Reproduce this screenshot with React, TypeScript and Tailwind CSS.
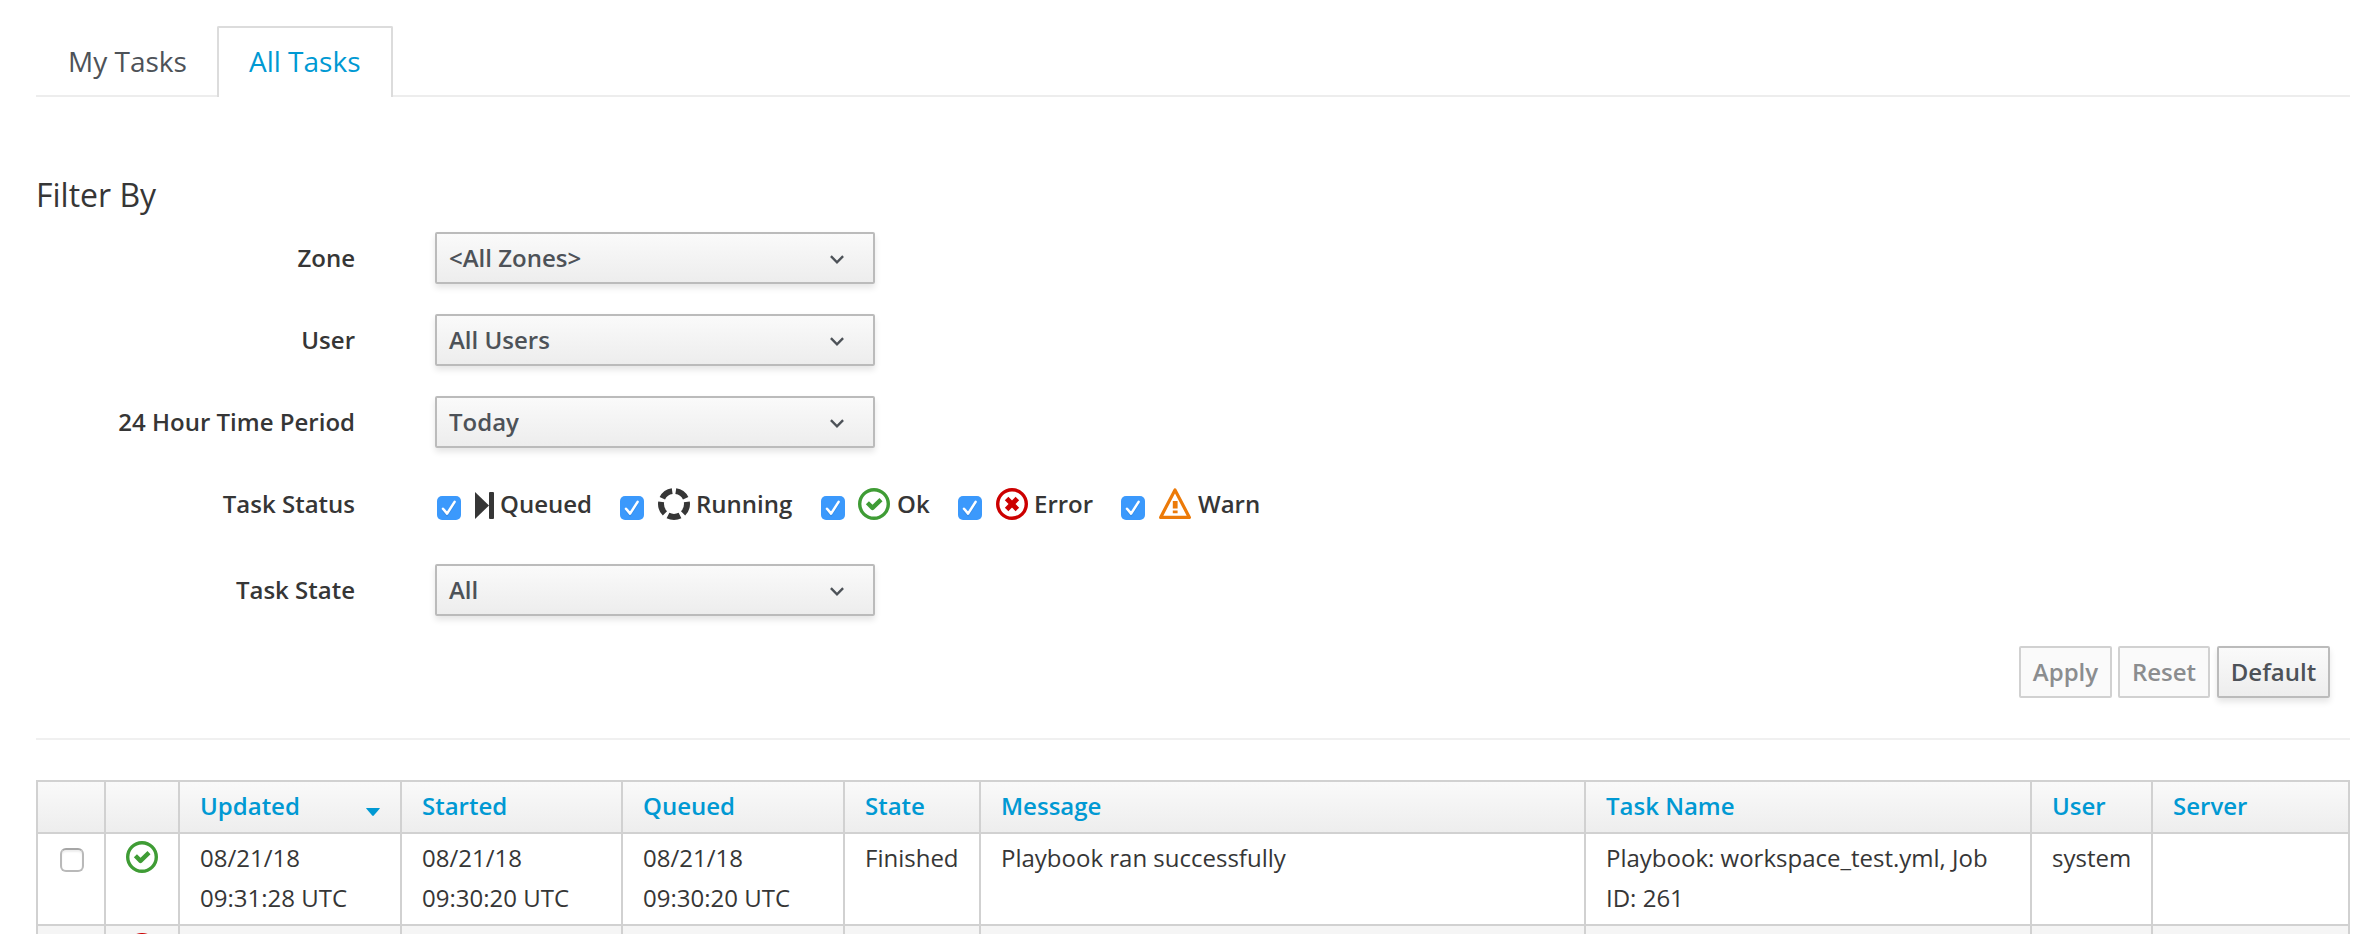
import type { ReactNode } from 'react';

const SELECT_LABEL = 'w-[319px] pt-[6px] text-right font-semibold leading-[40px]';

function OkIcon() {
  return (
    <svg className="block h-8 w-8 shrink-0" viewBox="0 0 32 32" fill="none">
      <circle cx="16" cy="16" r="14.3" stroke="#3f9c35" strokeWidth="3.4" />
      <path d="M9.4 14.8l5.1 5.1 8.5-8.2" stroke="#3f9c35" strokeWidth="4.4" strokeLinejoin="round" />
    </svg>
  );
}

function ErrorIcon() {
  return (
    <svg className="block h-8 w-8 shrink-0" viewBox="0 0 32 32" fill="none">
      <circle cx="16" cy="16" r="14.3" stroke="#cc0000" strokeWidth="3.4" />
      <path d="M10.6 10.6l10.8 10.8M21.4 10.6L10.6 21.4" stroke="#cc0000" strokeWidth="5" />
    </svg>
  );
}

function WarnIcon() {
  return (
    <svg className="block h-8 w-8 shrink-0" viewBox="0 0 32 32" fill="none">
      <path d="M16 2L30.4 29.4H1.6Z" stroke="#ec7a08" strokeWidth="3.2" strokeLinejoin="round" />
      <path d="M13.8 13h4.8v7.6h-4.8zM13.8 22.6h4.8v2.6h-4.8z" fill="#ec7a08" />
    </svg>
  );
}

function QueuedIcon() {
  return (
    <svg className="block h-8 w-[19px] shrink-0" viewBox="0 0 19 32" fill="#363636">
      <path d="M0 4v27l14-13.5z" />
      <rect x="14" y="4" width="5" height="27" rx="1" />
    </svg>
  );
}

function RunningIcon() {
  return (
    <svg className="block h-8 w-8 shrink-0" viewBox="0 0 32 32" fill="none">
      <circle
        cx="16"
        cy="16"
        r="13"
        stroke="#363636"
        strokeWidth="6"
        pathLength="100"
        strokeDasharray="15.4 4.6"
        strokeDashoffset="-2.3"
        transform="rotate(-90 16 16)"
      />
    </svg>
  );
}

function CheckedBox() {
  return (
    <span className="mt-2 block h-6 w-6 shrink-0 rounded-[5px] bg-[#3b99fc]">
      <svg className="block h-6 w-6" viewBox="0 0 24 24" fill="none">
        <path d="M6 13.2l4.1 4.9L17.6 6.4" stroke="#2c7fd8" strokeWidth="2.4" transform="translate(0 1)" opacity=".5" />
        <path d="M6 12.7l4.1 4.9L17.6 5.9" stroke="#fff" strokeWidth="2.5" strokeLinecap="round" strokeLinejoin="round" />
      </svg>
    </span>
  );
}

function Select({ value }: { value: string }) {
  return (
    <div className="flex h-[52px] w-[440px] items-center justify-between rounded-[2px] border-2 border-[#bbb] bg-linear-to-b from-[#fafafa] to-[#ededed] pl-3 pr-[29px] font-semibold leading-[40px] text-[#4d5258] shadow-[0_4px_6px_rgba(3,3,3,0.1)]">
      <span>{value}</span>
      <svg className="mt-[4px] h-[10px] w-[14px]" viewBox="0 0 14 10" fill="none">
        <path d="M.9 1.2l6.1 6.1 6.1-6.1" stroke="#4d5258" strokeWidth="2.4" />
      </svg>
    </div>
  );
}

function Field({ label, value }: { label: string; value: string }) {
  return (
    <div className="flex gap-20">
      <div className={SELECT_LABEL}>{label}</div>
      <Select value={value} />
    </div>
  );
}

function Status({ icon, label, className, gap }: { icon: ReactNode; label: string; className: string; gap: string }) {
  return (
    <div className={`flex shrink-0 ${className}`}>
      <CheckedBox />
      <div className={`flex ${gap}`}>
        {icon}
        <span className="-mt-[4px] font-semibold leading-[40px]">{label}</span>
      </div>
    </div>
  );
}

const COLUMNS = [
  { label: '', width: 'w-[68px]' },
  { label: '', width: 'w-[74px]' },
  { label: 'Updated', width: 'w-[222px]' },
  { label: 'Started', width: 'w-[221px]' },
  { label: 'Queued', width: 'w-[222px]' },
  { label: 'State', width: 'w-[136px]' },
  { label: 'Message', width: 'w-[605px]' },
  { label: 'Task Name', width: 'w-[446px]' },
  { label: 'User', width: 'w-[121px]' },
  { label: 'Server', width: 'w-[199px]' },
];

const CELL = 'border-l-2 border-b-2 border-[#d1d1d1] p-0 align-top last:border-r-2';
const TEXT = `${CELL} pl-5 pt-1 leading-[40px]`;

function UncheckedBox() {
  return (
    <div className="h-6 w-6 rounded-[6px] border-2 border-[#b9b9b9] border-t-[#a6a6a6] bg-white shadow-[inset_0_2px_2px_rgba(0,0,0,0.07)]" />
  );
}

export default function App() {
  return (
    <div className="h-[934px] w-full overflow-hidden bg-white pl-9 pr-2 font-['Open_Sans',sans-serif] text-[24px] text-[#363636]">
      <div className="flex h-[97px] w-[2314px] pt-[26px] text-[28px] leading-[44px]">
        <div className="w-[181px] border-b-2 border-[#ededed] pl-8 pt-[13px] text-[#4d5258]">My Tasks</div>
        <div className="w-[176px] rounded-t-[2px] border-x-2 border-t-2 border-[#dcdcdc] pl-[30px] pt-[11px] text-[#0099d3]">
          All Tasks
        </div>
        <div className="grow border-b-2 border-[#ededed]" />
      </div>

      <h3 className="mt-[78px] h-[57px] text-[32px] leading-[40px]">Filter By</h3>

      <div className="flex flex-col gap-[30px]">
        <Field label="Zone" value="<All Zones>" />
        <Field label="User" value="All Users" />
        <Field label="24 Hour Time Period" value="Today" />
      </div>

      <div className="flex h-[116px] pt-[40px]">
        <div className="-mt-[4px] w-[319px] text-right font-semibold leading-[40px]">Task Status</div>
        <div className="flex pl-[82px]">
          <Status className="w-[183px] gap-[14px]" gap="gap-[6px]" icon={<QueuedIcon />} label="Queued" />
          <Status className="w-[201px] gap-[14px]" gap="gap-[6px]" icon={<RunningIcon />} label="Running" />
          <Status className="w-[137px] gap-[13px]" gap="gap-[7px]" icon={<OkIcon />} label="Ok" />
          <Status className="w-[163px] gap-[14px]" gap="gap-[6px]" icon={<ErrorIcon />} label="Error" />
          <Status className="w-[163px] gap-[14px]" gap="gap-[7px]" icon={<WarnIcon />} label="Warn" />
        </div>
      </div>

      <Field label="Task State" value="All" />

      <div className="mt-[30px] flex h-[52px] w-[2294px] justify-end gap-[6px] text-center font-semibold leading-[48px]">
        <div className="w-[93px] rounded-[2px] border-2 border-[#d1d1d1] bg-[#fafafa] text-[#8b8d8f]">Apply</div>
        <div className="w-[92px] rounded-[2px] border-2 border-[#d1d1d1] bg-[#fafafa] text-[#8b8d8f]">Reset</div>
        <div className="ml-px w-[113px] rounded-[2px] border-2 border-[#bbb] bg-linear-to-b from-[#fafafa] to-[#ededed] text-[#4d5258] shadow-[0_4px_6px_rgba(3,3,3,0.1)]">
          Default
        </div>
      </div>

      <div className="mt-10 h-[2px] w-[2314px] bg-[#f0f0f0]" />

      <table className="mt-10 w-[2314px] table-fixed border-separate border-spacing-0">
        <thead>
          <tr className="h-[54px]">
            {COLUMNS.map((column, index) => (
              <th
                key={index}
                className={`${column.width} border-y-2 border-l-2 border-[#d1d1d1] bg-linear-to-b from-[#fafafa] to-[#ededed] bg-origin-border p-0 pl-5 pt-1 text-left align-top font-semibold leading-[40px] text-[#0099d3] last:border-r-2`}
              >
                <div className="flex items-center justify-between pr-5">
                  {column.label}
                  {column.label === 'Updated' && (
                    <svg className="mt-[12px] h-2 w-[14px]" viewBox="0 0 14 8" fill="#0099d3">
                      <path d="M.6 0h12.8q.8 0 .2.8L7.8 7.5q-.8.8-1.6 0L.4.8Q-.2 0 .6 0z" />
                    </svg>
                  )}
                </div>
              </th>
            ))}
          </tr>
        </thead>
        <tbody>
          <tr className="h-[92px]">
            <td className={`${CELL} pl-[22px] pt-[14px]`}>
              <UncheckedBox />
            </td>
            <td className={`${CELL} pl-5 pt-[7px]`}>
              <OkIcon />
            </td>
            <td className={TEXT}>08/21/18<br />09:31:28 UTC</td>
            <td className={TEXT}>08/21/18<br />09:30:20 UTC</td>
            <td className={TEXT}>08/21/18<br />09:30:20 UTC</td>
            <td className={TEXT}>Finished</td>
            <td className={TEXT}>Playbook ran successfully</td>
            <td className={TEXT}>Playbook: workspace_test.yml, Job<br />ID: 261</td>
            <td className={TEXT}>system</td>
            <td className={TEXT} />
          </tr>
          <tr className="h-[92px] bg-[#f5f5f5]">
            <td className={`${CELL} pl-[22px] pt-[14px]`}>
              <UncheckedBox />
            </td>
            <td className={`${CELL} pl-5 pt-[7px]`}>
              <ErrorIcon />
            </td>
            {COLUMNS.slice(2).map((column) => (
              <td key={column.label} className={CELL} />
            ))}
          </tr>
        </tbody>
      </table>
    </div>
  );
}
